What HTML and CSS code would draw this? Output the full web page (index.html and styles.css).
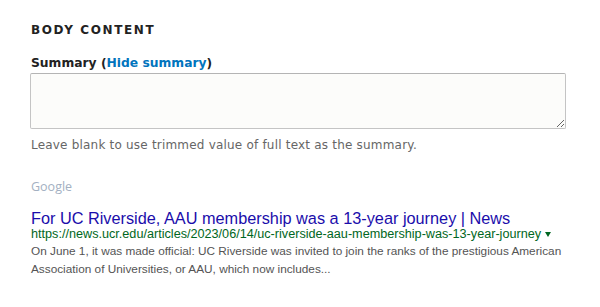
FILE: index.html
```html
<!DOCTYPE html>
<html>
<head>
<meta charset="utf-8">
<link rel="stylesheet" href="styles.css">
</head>
<body>
<div class="page">
  <h2 class="section-title">BODY CONTENT</h2>
  <div class="field">
    <label class="field-label">Summary (<a href="#" class="link">Hide summary</a>)</label>
    <textarea class="summary-input"></textarea>
    <div class="description">Leave blank to use trimmed value of full text as the summary.</div>
  </div>
  <div class="preview">
    <div class="preview-label">Google</div>
    <div class="serp">
      <div class="serp-title">For UC Riverside, AAU membership was a 13-year journey | News</div>
      <div class="serp-url">https://news.ucr.edu/articles/2023/06/14/uc-riverside-aau-membership-was-13-year-journey<span class="caret"></span></div>
      <div class="serp-snippet">On June 1, it was made official: UC Riverside was invited to join the ranks of the prestigious American Association of Universities, or AAU, which now includes...</div>
    </div>
  </div>
</div>
</body>
</html>
```
FILE: styles.css
```css
html, body { margin: 0; padding: 0; background: #fff; }
.page {
  padding: 22px 30px 0 30px;
  font-family: "DejaVu Sans", "Noto Sans", sans-serif;
  color: #222;
}
.section-title {
  margin: 0 0 17px 1px;
  font-size: 12px;
  font-weight: bold;
  letter-spacing: 1.6px;
  color: #222;
  line-height: 16px;
}
.field { display: flex; flex-direction: column; }
.field-label {
  font-size: 12.3px;
  font-weight: bold;
  line-height: 16px;
  margin: 0 0 2px 1px;
  color: #222;
}
.link { color: #0074bd; text-decoration: none; }
.summary-input {
  box-sizing: border-box;
  width: 536px;
  height: 56px;
  margin: 0;
  border: 1px solid #c4c4c4;
  border-top-color: #b4b4b4;
  border-radius: 2px;
  background: #fcfcfa;
  resize: vertical;
  padding: 4px;
}
.description {
  font-size: 12px;
  color: #666;
  line-height: 16px;
  margin: 8px 0 0 1px;
  letter-spacing: 0.2px;
}
.preview { margin-top: 26px; padding-left: 1px; }
.preview-label {
  font-family: "Open Sans", "Noto Sans", sans-serif;
  font-size: 12.5px;
  color: #a3b0c2;
  line-height: 16px;
  margin-bottom: 15px;
}
.serp { font-family: "Liberation Sans", Arial, sans-serif; }
.serp-title {
  color: #1a0dab;
  font-size: 16.3px;
  line-height: 16px;
}
.serp-url {
  color: #006621;
  font-size: 12.65px;
  line-height: 15px;
  margin-top: 1px;
}
.caret {
  display: inline-block;
  margin-left: 4px;
  vertical-align: middle;
  border-left: 3px solid transparent;
  border-right: 3px solid transparent;
  border-top: 5px solid #006621;
}
.serp-snippet {
  color: #545454;
  font-size: 11.8px;
  line-height: 18px;
  width: 545px;
  margin-top: 0;
}
```
